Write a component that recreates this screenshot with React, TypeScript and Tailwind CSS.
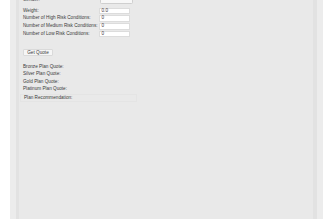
import React from "react";

const rows = [
  { label: "Weight:", value: "0.0" },
  { label: "Number of High Risk Conditions:", value: "0" },
  { label: "Number of Medium Risk Conditions:", value: "0" },
  { label: "Number of Low Risk Conditions:", value: "0" },
];

const results = [
  "Bronze Plan Quote:",
  "Silver Plan Quote:",
  "Gold Plan Quote:",
  "Platinum Plan Quote:",
  "Plan Recommendation:",
];

export default function App() {
  return (
    <div className="h-[222px] w-[333px] overflow-hidden bg-white font-['Liberation_Sans',Arial,sans-serif] text-[4.67px] leading-none text-[#3a3a3a]">
      <div className="ml-[10px] h-full w-[313px] bg-[#ececec] px-[6px]">
        <div className="h-full border-l-[3px] border-r-[4px] border-[#e2e2e2] bg-[#e9e9e9] pl-[4px]">
          {/* form rows, page scrolled a little so Gender is cut off */}
          <div className="-mt-[3px] flex flex-col">
            <div className="flex h-[7px] items-center">
              <span className="w-[77px] shrink-0">Gender:</span>
              <div className="h-[6px] w-[33px] rounded-[1.5px] border-[0.5px] border-[#cfcfcf] bg-[#f7f7f7]" />
            </div>
            <div className="mt-[3.6px] flex flex-col gap-[1.3px]">
              {rows.map((r) => (
                <div key={r.label} className="flex h-[6.5px] items-center">
                  <span className="w-[76px] shrink-0 whitespace-nowrap">{r.label}</span>
                  <div className="flex h-[6.5px] w-[31px] items-center border-[0.5px] border-[#dcdcdc] bg-white pl-[1.5px]">
                    {r.value}
                  </div>
                </div>
              ))}
            </div>
          </div>

          <button className="mt-[12px] flex h-[7px] w-[30px] items-center justify-center rounded-[1px] border-[0.5px] border-[#dadada] bg-[#f6f6f6] text-[4.67px] text-[#3a3a3a]">
            Get Quote
          </button>

          <div className="mt-[8.5px] flex flex-col gap-[2.5px]">
            {results.map((t, i) => (
              <div
                key={t}
                className={
                  i === results.length - 1
                    ? "-ml-[3px] w-[117px] border-[0.5px] border-[#e4e4e4] py-[0.5px] pl-[3px]"
                    : "h-[4.8px]"
                }
              >
                {t}
              </div>
            ))}
          </div>
        </div>
      </div>
    </div>
  );
}
